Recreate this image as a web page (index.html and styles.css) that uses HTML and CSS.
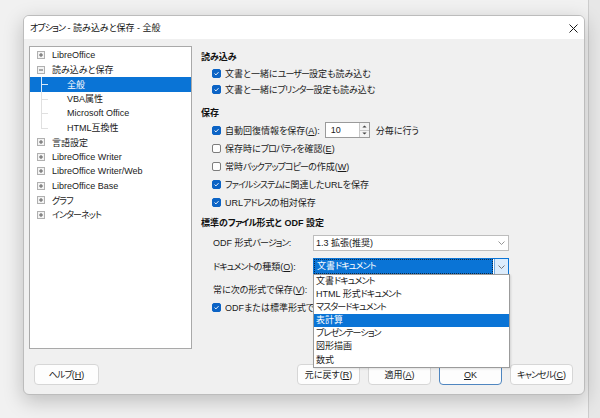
FILE: index.html
```html
<!DOCTYPE html>
<html lang="ja">
<head>
<meta charset="utf-8">
<title>オプション</title>
<link rel="stylesheet" href="styles.css">
</head>
<body>
<div class="desk">
  <div class="dialog">
    <div class="titlebar">
      <span class="title"><span class="k">オプション</span> - 読み込みと保存 - 全般</span>
      <svg class="close" width="9" height="9" viewBox="0 0 9 9"><path d="M0.5 0.5L8.5 8.5M8.5 0.5L0.5 8.5" stroke="#1a1a1a" stroke-width="1"/></svg>
    </div>
    <div class="content">
      <div class="main">
        <div class="tree">
          <div class="row"><svg class="exp" viewBox="0 0 8 8"><rect x="0.5" y="0.5" width="7" height="7" fill="#f3f3f3" stroke="#b0b0b0"/><path d="M2 4H6M4 2V6" stroke="#606060"/></svg><span>LibreOffice</span></div>
          <div class="row"><svg class="exp" viewBox="0 0 8 8"><rect x="0.5" y="0.5" width="7" height="7" fill="#f3f3f3" stroke="#b0b0b0"/><path d="M2 4H6" stroke="#606060"/></svg><span>読み込みと保存</span></div>
          <div class="row child sel"><span class="guide"></span><span>全般</span></div>
          <div class="row child"><span class="guide"></span><span>VBA属性</span></div>
          <div class="row child"><span class="guide"></span><span>Microsoft Office</span></div>
          <div class="row child last"><span class="guide"></span><span>HTML互換性</span></div>
          <div class="row"><svg class="exp" viewBox="0 0 8 8"><rect x="0.5" y="0.5" width="7" height="7" fill="#f3f3f3" stroke="#b0b0b0"/><path d="M2 4H6M4 2V6" stroke="#606060"/></svg><span>言語設定</span></div>
          <div class="row"><svg class="exp" viewBox="0 0 8 8"><rect x="0.5" y="0.5" width="7" height="7" fill="#f3f3f3" stroke="#b0b0b0"/><path d="M2 4H6M4 2V6" stroke="#606060"/></svg><span>LibreOffice Writer</span></div>
          <div class="row"><svg class="exp" viewBox="0 0 8 8"><rect x="0.5" y="0.5" width="7" height="7" fill="#f3f3f3" stroke="#b0b0b0"/><path d="M2 4H6M4 2V6" stroke="#606060"/></svg><span>LibreOffice Writer/Web</span></div>
          <div class="row"><svg class="exp" viewBox="0 0 8 8"><rect x="0.5" y="0.5" width="7" height="7" fill="#f3f3f3" stroke="#b0b0b0"/><path d="M2 4H6M4 2V6" stroke="#606060"/></svg><span>LibreOffice Base</span></div>
          <div class="row"><svg class="exp" viewBox="0 0 8 8"><rect x="0.5" y="0.5" width="7" height="7" fill="#f3f3f3" stroke="#b0b0b0"/><path d="M2 4H6M4 2V6" stroke="#606060"/></svg><span class="k">グラフ</span></div>
          <div class="row"><svg class="exp" viewBox="0 0 8 8"><rect x="0.5" y="0.5" width="7" height="7" fill="#f3f3f3" stroke="#b0b0b0"/><path d="M2 4H6M4 2V6" stroke="#606060"/></svg><span class="k">インターネット</span></div>
        </div>

        <div class="pane">
          <div class="sec">読み込み</div>
          <div class="chk"><span class="cb on"><svg viewBox="0 0 9 9"><path d="M2 4.6L3.8 6.3L7.1 2.8" fill="none" stroke="#fff" stroke-width="1.2"/></svg></span><span>文書と一緒に<span class="k">ユーザー</span>設定も読み込む</span></div>
          <div class="chk"><span class="cb on"><svg viewBox="0 0 9 9"><path d="M2 4.6L3.8 6.3L7.1 2.8" fill="none" stroke="#fff" stroke-width="1.2"/></svg></span><span>文書と一緒に<span class="k">プリンター</span>設定も読み込む</span></div>

          <div class="sec sec2">保存</div>
          <div class="chk tall"><span class="cb on"><svg viewBox="0 0 9 9"><path d="M2 4.6L3.8 6.3L7.1 2.8" fill="none" stroke="#fff" stroke-width="1.2"/></svg></span><span>自動回復情報を保存(<u>A</u>):</span>
            <span class="spin"><span class="spin-val">10</span><span class="spin-btns"><span class="sb"><svg viewBox="0 0 7 4"><path d="M0.5 3.5L3.5 0.5L6.5 3.5Z" fill="#444"/></svg></span><span class="sb"><svg viewBox="0 0 7 4"><path d="M0.5 0.5L3.5 3.5L6.5 0.5Z" fill="#444"/></svg></span></span></span>
            <span class="after">分毎に行う</span></div>
          <div class="chk tall"><span class="cb"></span><span>保存時に<span class="k">プロパティ</span>を確認(<u>E</u>)</span></div>
          <div class="chk tall"><span class="cb"></span><span>常時<span class="k">バックアップコピー</span>の作成(<u>W</u>)</span></div>
          <div class="chk tall"><span class="cb on"><svg viewBox="0 0 9 9"><path d="M2 4.6L3.8 6.3L7.1 2.8" fill="none" stroke="#fff" stroke-width="1.2"/></svg></span><span><span class="k">ファイルシステム</span>に関連したURLを保存</span></div>
          <div class="chk tall"><span class="cb on"><svg viewBox="0 0 9 9"><path d="M2 4.6L3.8 6.3L7.1 2.8" fill="none" stroke="#fff" stroke-width="1.2"/></svg></span><span>URL<span class="k">アドレス</span>の相対保存</span></div>

          <div class="sec sec3">標準の<span class="k">ファイル</span>形式と ODF 設定</div>
          <div class="frow f1"><span class="flabel">ODF 形式<span class="k">バージョン</span>:</span>
            <div class="combo"><span class="val">1.3 拡張(推奨)</span><span class="arrow"><svg viewBox="0 0 7 4"><path d="M0.5 0.5L3.5 3.5L6.5 0.5" fill="none" stroke="#8a8a8a" stroke-width="0.9"/></svg></span></div>
          </div>
          <div class="frow f2"><span class="flabel"><span class="k">ドキュメント</span>の種類(<u>O</u>):</span>
            <div class="combo open"><span class="val">文書<span class="k">ドキュメント</span></span><span class="arrow"><svg viewBox="0 0 7 4"><path d="M0.5 0.5L3.5 3.5L6.5 0.5" fill="none" stroke="#6a6a6a" stroke-width="0.9"/></svg></span>
              <div class="dropdown">
                <div class="opt">文書<span class="k">ドキュメント</span></div>
                <div class="opt">HTML 形式<span class="k">ドキュメント</span></div>
                <div class="opt"><span class="k">マスタードキュメント</span></div>
                <div class="opt hl">表計算</div>
                <div class="opt"><span class="k">プレゼンテーション</span></div>
                <div class="opt">図形描画</div>
                <div class="opt">数式</div>
              </div>
            </div>
          </div>
          <div class="frow f3"><span class="flabel">常に次の形式で保存(<u>V</u>):</span></div>
          <div class="chk tall"><span class="cb on"><svg viewBox="0 0 9 9"><path d="M2 4.6L3.8 6.3L7.1 2.8" fill="none" stroke="#fff" stroke-width="1.2"/></svg></span><span class="clip">ODFまたは標準形式で保存しない場合に警告する</span></div>
        </div>
      </div>

      <div class="buttons">
        <span class="btn help"><span class="k">ヘルプ</span>(<u>H</u>)</span>
        <div class="btn-group">
          <span class="btn">元に戻す(<u>R</u>)</span>
          <span class="btn">適用(<u>A</u>)</span>
          <span class="btn ok"><u>O</u>K</span>
          <span class="btn"><span class="k">キャンセル</span>(<u>C</u>)</span>
        </div>
      </div>
    </div>
  </div>
</div>
</body>
</html>
```

FILE: styles.css
```css
* { box-sizing: border-box; }
html, body { margin: 0; padding: 0; }
body {
  width: 600px;
  height: 418px;
  overflow: hidden;
  background: linear-gradient(to right, #f1f1f1 0, #f1f1f1 588px, #cdcdcd 588px, #cdcdcd 589px, #e7e7e7 589px);
  font-family: "Liberation Sans", "Noto Sans CJK JP", sans-serif;
  font-size: 9px;
  color: #1a1a1a;
  font-feature-settings: "palt";
}
u { text-underline-offset: 1px; }
.k { letter-spacing: -0.9px; }

.desk { padding: 15px 0 0 23px; }

.dialog {
  width: 562px;
  height: 380px;
  border: 1px solid #bcbcbc;
  border-radius: 6px;
  overflow: hidden;
  box-shadow: 0 6px 20px rgba(0, 0, 0, 0.22);
  display: flex;
  flex-direction: column;
  background: #f0f0f0;
}

.titlebar {
  height: 23px;
  flex: none;
  background: #fff;
  display: flex;
  align-items: center;
  justify-content: space-between;
  padding: 0 6px 0 6px;
}
.title { font-size: 9px; color: #111; }
.close { display: block; margin-top: 1px; }

.content {
  flex: 1;
  display: flex;
  flex-direction: column;
  padding: 7px 11px 0 5px;
}

.main { display: flex; gap: 9px; align-items: flex-start; }

/* tree */
.tree {
  width: 163px;
  height: 303px;
  flex: none;
  background: #fff;
  border: 1px solid #a9a9a9;
  padding-top: 1px;
}
.row {
  height: 14.5px;
  display: flex;
  align-items: center;
  white-space: nowrap;
}
.exp { width: 8px; height: 8px; margin: 0 7px; flex: none; display: block; }
.guide {
  width: 26px;
  height: 100%;
  margin-left: 11px;
  flex: none;
  position: relative;
}
.guide::before {
  content: "";
  position: absolute;
  left: 0; top: 0; bottom: 0;
  border-left: 1px solid #e0e0e0;
}
.last .guide::before { bottom: 50%; }
.guide::after {
  content: "";
  position: absolute;
  left: 0; top: 50%;
  width: 7px;
  border-top: 1px solid #e0e0e0;
}
.row.sel { background: #0a74d6; color: #fff; }
.sel .guide::before, .sel .guide::after { border-color: #d8e8f8; }

/* right pane */
.pane { flex: 1; padding-top: 3px; }
.sec { height: 16px; line-height: 16px; font-weight: bold; color: #111; }
.sec2 { margin-top: 8px; }
.sec3 { margin-top: 4px; }

.chk {
  height: 16px;
  display: flex;
  align-items: center;
  padding-left: 11px;
  white-space: nowrap;
}
.chk.tall { height: 18px; }
.cb {
  width: 9px;
  height: 9px;
  margin-right: 4px;
  flex: none;
  border: 1px solid #7c7c7c;
  border-radius: 2px;
  background: #fdfdfd;
  display: flex;
}
.cb.on { background: #0b63c5; border-color: #0b63c5; }
.cb svg { width: 100%; height: 100%; display: block; }
.clip { display: block; max-width: 88px; overflow: hidden; white-space: nowrap; }

.spin {
  display: flex;
  width: 45px;
  height: 16px;
  margin-left: 5px;
  background: #fff;
  border: 1px solid #9a9a9a;
}
.spin-val { flex: 1; padding-left: 5px; line-height: 14px; }
.spin-btns { width: 10px; display: flex; flex-direction: column; border-left: 1px solid #c8c8c8; }
.sb { flex: 1; display: flex; align-items: center; justify-content: center; background: #f3f3f3; }
.sb + .sb { border-top: 1px solid #c8c8c8; }
.sb svg { width: 5px; height: 3px; display: block; }
.after { margin-left: 6px; }

.frow { display: flex; align-items: center; padding-left: 12px; white-space: nowrap; }
.f1 { height: 17px; margin-top: 3px; }
.f2 { height: 17px; margin-top: 7px; }
.f3 { height: 18px; margin-top: 5px; }
.flabel { width: 100px; flex: none; }

.combo {
  width: 196px;
  height: 16px;
  display: flex;
  background: #fff;
  border: 1px solid #bdbdbd;
  position: relative;
}
.combo .val { flex: 1; padding-left: 2px; line-height: 14px; }
.combo .arrow { width: 14px; display: flex; align-items: center; justify-content: center; }
.combo .arrow svg { width: 7px; height: 4px; display: block; }

.combo.open { height: 17px; border-color: #0a74d6; }
.combo.open .val {
  background: #0a74d6;
  color: #fff;
  line-height: 13px;
  border: 1px dotted #0b2a4a;
  margin: 0 1px 0 0;
}
.combo.open .arrow { background: #dcecfc; border-left: 1px solid #6fa8e0; }

.dropdown {
  position: absolute;
  left: -1px;
  top: 100%;
  width: 197px;
  background: #fff;
  border: 1px solid #9b9b9b;
  z-index: 5;
  box-shadow: 1px 1px 2px rgba(0, 0, 0, 0.12);
}
.opt { height: 13.1px; line-height: 13.1px; padding-left: 2px; white-space: nowrap; }
.opt.hl { background: #0a74d6; color: #fff; }

/* buttons */
.buttons {
  margin-top: 15px;
  height: 21px;
  display: flex;
  padding-left: 5px;
}
.btn-group { margin-left: auto; display: flex; gap: 8px; }
.btn {
  width: 63px;
  height: 21px;
  display: flex;
  align-items: center;
  justify-content: center;
  background: #fdfdfd;
  border: 1px solid #d6d6d6;
  border-radius: 4px;
  white-space: nowrap;
}
.btn.help { width: 65px; }
.btn.ok { border-color: #4f86c0; }
```
